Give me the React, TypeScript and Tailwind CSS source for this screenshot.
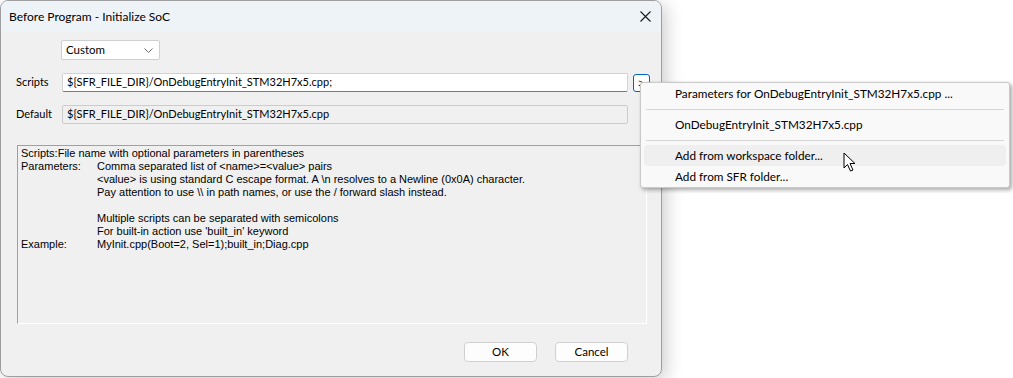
import React from "react";

const UI = { fontFamily: 'Lato, "Segoe UI", "Noto Sans", Arial, sans-serif' };
const OLD = { fontFamily: '"Liberation Sans", Arial, sans-serif' };

function HelpText() {
  const rows: [string, string][] = [
    ["Parameters:", "Comma separated list of <name>=<value> pairs"],
    ["", "<value> is using standard C escape format. A \\n resolves to a Newline (0x0A) character."],
    ["", "Pay attention to use \\\\ in path names, or use the / forward slash instead."],
    ["", "\u00a0"],
    ["", "Multiple scripts can be separated with semicolons"],
    ["", "For built-in action use 'built_in' keyword"],
    ["Example:", "MyInit.cpp(Boot=2, Sel=1);built_in;Diag.cpp"],
  ];
  return (
    <div
      className="ml-[1px] mr-[14px] h-[179px] border-t border-l border-t-[#a0a0a0] border-l-[#a0a0a0] border-b border-r border-b-white border-r-white pl-[3px] pt-[1px] text-[11px] leading-[13px] text-black"
      style={OLD}
    >
      <div className="whitespace-pre">Scripts:File name with optional parameters in parentheses</div>
      {rows.map(([a, b], i) => (
        <div key={i} className="flex whitespace-pre">
          <div className="w-[76px] shrink-0">{a}</div>
          <div>{b}</div>
        </div>
      ))}
    </div>
  );
}

function Menu() {
  const item = "flex h-[21px] items-center pl-[31px] mx-[3px] rounded-[4px]";
  return (
    <div
      className="absolute left-[640px] top-[82px] w-[370px] h-[106px] rounded-[3px] border border-[#c9c9c9] bg-[#f9f9f9] shadow-[2px_2px_4px_rgba(0,0,0,0.35)] text-[11.75px] text-black"
      style={UI}
    >
      <div className={item}>Parameters for OnDebugEntryInit_STM32H7x5.cpp ...</div>
      <div className="flex h-[10px] items-center px-[5px]">
        <div className="h-px w-full bg-[#d6d6d6]" />
      </div>
      <div className={item}>OnDebugEntryInit_STM32H7x5.cpp</div>
      <div className="flex h-[10px] items-center px-[5px]">
        <div className="h-px w-full bg-[#d6d6d6]" />
      </div>
      <div className={item + " bg-[#efefef]"}>Add from workspace folder...</div>
      <div className={item}>Add from SFR folder...</div>
    </div>
  );
}

function Cursor() {
  return (
    <svg className="absolute left-[843px] top-[152px]" width="14" height="21" viewBox="0 0 14 21">
      <path
        d="M1 1 L1 16 L4.5 12.5 L7.5 19 L10 18 L7 11.5 L12 11.5 Z"
        fill="white"
        stroke="black"
        strokeWidth="1"
        strokeLinejoin="miter"
      />
    </svg>
  );
}

export default function App() {
  return (
    <div className="relative h-[378px] w-[1013px] overflow-hidden bg-white">
      <div
        className="flex h-[377px] w-[662px] flex-col overflow-hidden rounded-[8px] border border-[#9e9e9e] bg-[#f0f0f0] shadow-[4px_4px_18px_rgba(0,0,0,0.2)]"
        style={UI}
      >
        {/* Title bar */}
        <div className="flex h-[31px] shrink-0 items-center justify-between bg-[#eef3f8] pl-[8px] pr-[9px]">
          <span className="text-[12px] text-black">Before Program - Initialize SoC</span>
          <svg width="11" height="11" viewBox="0 0 11 11" className="mr-[1px]">
            <path d="M0.5 0.5 L10.5 10.5 M10.5 0.5 L0.5 10.5" stroke="#1a1a1a" strokeWidth="1.1" />
          </svg>
        </div>

        {/* Body */}
        <div className="flex flex-1 flex-col pl-[15px] pt-[8px] text-[11px] text-black">
          <div className="ml-[45px] flex h-[20px] w-[99px] items-center justify-between rounded-[2px] border border-[#cfcfcf] bg-white pl-[4px] pr-[6px] text-[11.5px]">
            <span>Custom</span>
            <svg width="9" height="5" viewBox="0 0 9 5">
              <path d="M0.5 0.5 L4.5 4.5 L8.5 0.5" fill="none" stroke="#6a6a6a" strokeWidth="1" />
            </svg>
          </div>

          <div className="mt-[13px] flex h-[19px] items-center">
            <div className="w-[46px]">Scripts</div>
            <div className="flex h-[19px] w-[566px] items-center rounded-[2px] border border-[#d2d2d2] border-b-[#7a7a7a] bg-white pl-[4px]">
              ${"{"}SFR_FILE_DIR{"}"}/OnDebugEntryInit_STM32H7x5.cpp;
            </div>
            <div
              className="ml-[5px] flex h-[18px] w-[17px] items-center justify-center rounded-[3px] border border-[#0067c0] bg-white text-[11px] leading-[14px] text-black"
              style={OLD}
            >
              &gt;
            </div>
          </div>

          <div className="mt-[13px] flex h-[19px] items-center">
            <div className="w-[46px]">Default</div>
            <div className="flex h-[19px] w-[566px] items-center rounded-[2px] border border-[#cccccc] bg-[#f0f0f0] pl-[4px]">
              ${"{"}SFR_FILE_DIR{"}"}/OnDebugEntryInit_STM32H7x5.cpp
            </div>
          </div>

          <div className="mt-[21px]">
            <HelpText />
          </div>

          <div className="mt-[18px] flex gap-[18px] pl-[448px]">
            <button className="h-[20px] w-[73px] rounded-[4px] border border-[#d0d0d0] bg-[#fdfdfd] text-[11.5px]">
              OK
            </button>
            <button className="h-[20px] w-[73px] rounded-[4px] border border-[#d0d0d0] bg-[#fdfdfd] text-[11.5px]">
              Cancel
            </button>
          </div>
        </div>
      </div>
      <Menu />
      <Cursor />
    </div>
  );
}
